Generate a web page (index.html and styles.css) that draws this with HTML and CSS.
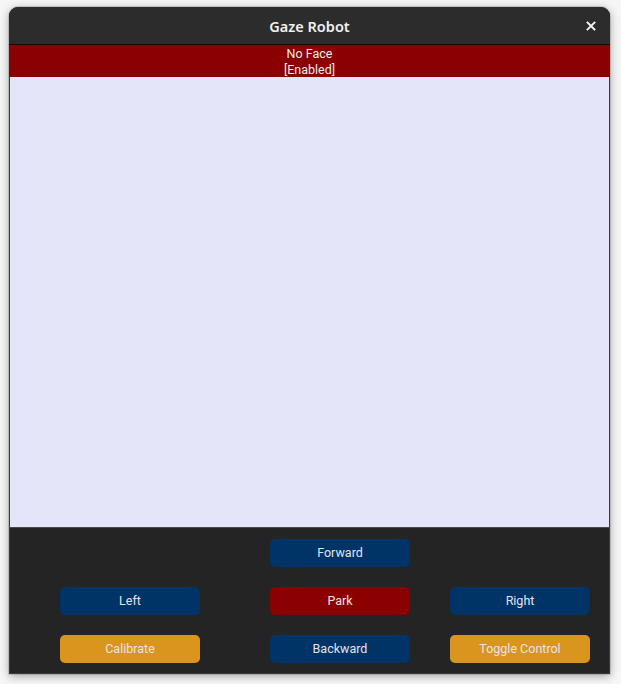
FILE: index.html
```html
<!DOCTYPE html>
<html>
<head>
<meta charset="utf-8">
<link rel="stylesheet" href="styles.css">
</head>
<body>
<div class="window">
  <div class="titlebar">
    <span class="title">Gaze Robot</span>
    <svg class="close" width="10" height="10" viewBox="0 0 10 10"><path d="M1.5 1.5 L8.5 8.5 M8.5 1.5 L1.5 8.5" stroke="#f2f2f2" stroke-width="1.9" stroke-linecap="square"/></svg>
  </div>
  <div class="status">
    <div>No Face</div>
    <div>[Enabled]</div>
  </div>
  <div class="view"></div>
  <div class="controls">
    <button class="btn blue c2">Forward</button>
    <button class="btn blue c1">Left</button>
    <button class="btn red c2">Park</button>
    <button class="btn blue c3">Right</button>
    <button class="btn gold c1">Calibrate</button>
    <button class="btn blue c2">Backward</button>
    <button class="btn gold c3">Toggle Control</button>
  </div>
</div>
</body>
</html>
```
FILE: styles.css
```css
html, body {
  margin: 0;
  padding: 0;
  background: #f6f6f6;
  width: 621px;
  height: 684px;
  overflow: hidden;
}
body {
  padding-top: 7px;
  padding-left: 9px;
  box-sizing: border-box;
  font-family: Roboto, "Noto Sans", sans-serif;
}
.window {
  width: 601px;
  height: 667px;
  border-radius: 9px 9px 0 0;
  overflow: hidden;
  box-shadow: 0 2px 10px rgba(0,0,0,0.35), 0 0 0 1px rgba(0,0,0,0.12);
  background: #242424;
  display: flex;
  flex-direction: column;
}
.titlebar {
  height: 37px;
  background: #2c2c2c;
  border-bottom: 1px solid #0e0e0e;
  position: relative;
  display: flex;
  align-items: center;
  justify-content: center;
  flex-shrink: 0;
}
.title {
  color: #f0f0f0;
  font-family: "Noto Sans", sans-serif;
  font-weight: 600;
  font-size: 14.5px;
  margin-top: 1px;
}
.close {
  position: absolute;
  right: 14px;
  top: 14px;
}
.status {
  height: 32px;
  background: #8b0000;
  color: #ececec;
  font-size: 12.5px;
  line-height: 16px;
  text-align: center;
  flex-shrink: 0;
  padding-top: 1px;
  box-sizing: border-box;
}
.view {
  height: 451px;
  background: #e5e5f9;
  border-bottom: 1px solid #4a4a4a;
  border-left: 1px solid #3a3a3a;
  border-right: 1px solid #3a3a3a;
  box-sizing: border-box;
  flex-shrink: 0;
}
.controls {
  flex: 1;
  border-left: 1px solid #3a3a3a;
  border-right: 1px solid #3a3a3a;
  border-bottom: 1px solid #3a3a3a;
  display: grid;
  grid-template-columns: 210px 180px 140px;
  grid-auto-rows: 28px;
  row-gap: 20px;
  padding: 11px 0 0 50px;
  box-sizing: border-box;
}
.btn {
  width: 140px;
  height: 28px;
  border: none;
  border-radius: 5px;
  color: #e4e4ea;
  font-family: Roboto, sans-serif;
  font-weight: 400;
  font-size: 12.5px;
  padding: 0 0 1px 0;
}
.c1 { grid-column: 1; }
.c2 { grid-column: 2; }
.c3 { grid-column: 3; }
.blue { background: #003366; }
.red { background: #8b0000; }
.gold { background: #da951e; }
```
